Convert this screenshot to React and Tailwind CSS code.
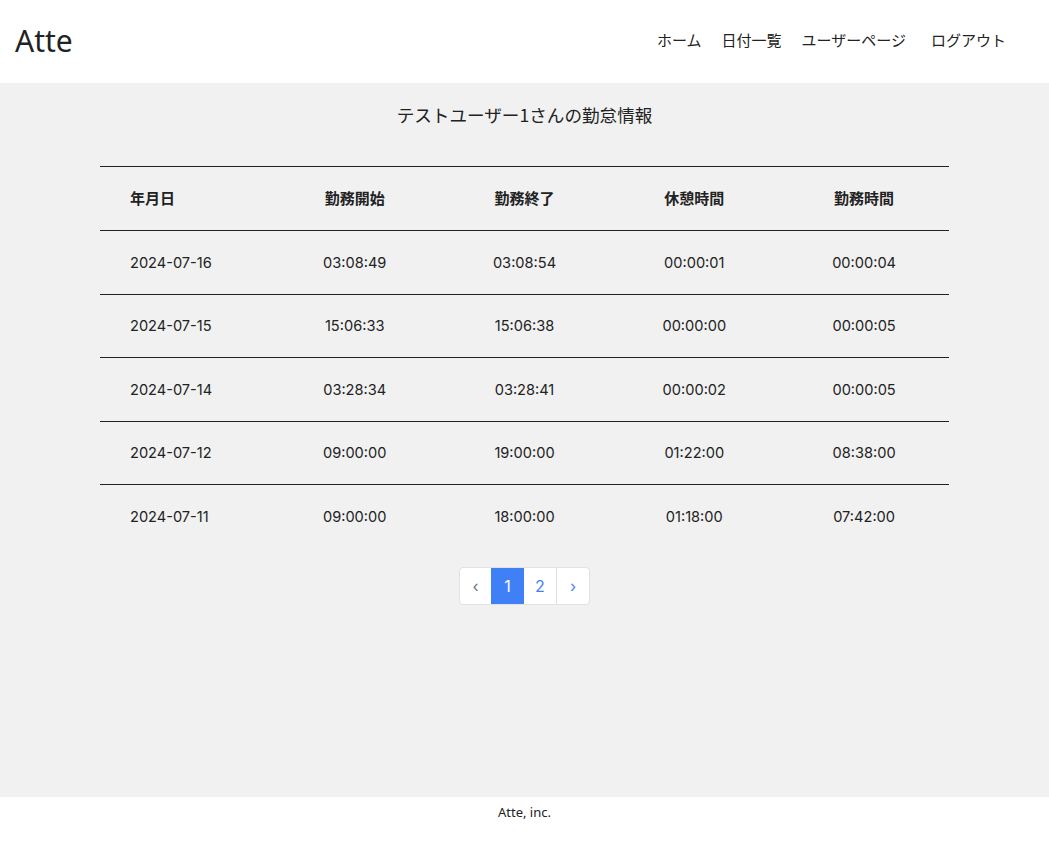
import React from "react";

const rows = [
  ["2024-07-16", "03:08:49", "03:08:54", "00:00:01", "00:00:04"],
  ["2024-07-15", "15:06:33", "15:06:38", "00:00:00", "00:00:05"],
  ["2024-07-14", "03:28:34", "03:28:41", "00:00:02", "00:00:05"],
  ["2024-07-12", "09:00:00", "19:00:00", "01:22:00", "08:38:00"],
  ["2024-07-11", "09:00:00", "18:00:00", "01:18:00", "07:42:00"],
];
const heads = ["年月日", "勤務開始", "勤務終了", "休憩時間", "勤務時間"];

export default function App() {
  return (
    <div className="min-h-[852px] flex flex-col bg-white text-[#222]" style={{ fontFamily: '"Noto Sans", "Noto Sans CJK JP", sans-serif' }}>
      <header className="h-[83px] flex items-center justify-between pl-[15px] pr-[43px] bg-white">
        <h1 className="text-[30px] leading-none text-[#222] -mt-[1px]">Atte</h1>
        <nav className="flex items-center text-[15px] text-[#222] -mt-[2px]" style={{ fontFamily: '"Noto Sans CJK JP", sans-serif' }}>
          <a className="mr-[20px]">ホーム</a>
          <a className="mr-[20px]">日付一覧</a>
          <a className="mr-[25px]">ユーザーページ</a>
          <a>ログアウト</a>
        </nav>
      </header>
      <main className="h-[714px] bg-[#f1f1f1] flex flex-col items-center">
        <h2 className="mt-[21px] text-[17.6px] leading-[22px] text-[#222]" style={{ fontFamily: '"Noto Sans CJK JP", sans-serif' }}>テストユーザー1さんの勤怠情報</h2>
        <table className="mt-[40px] w-[849px] border-collapse text-[14.6px] table-fixed" style={{ fontFamily: 'Inter, "Noto Sans CJK JP", sans-serif' }}>
          <thead>
            <tr className="h-[64px] border-t border-b border-[#222]">
              {heads.map((h, i) => (
                <th key={h} className={`font-bold text-[15px] text-[#222] ${i === 0 ? "text-left pl-[30px]" : "text-center"}`} style={{ fontFamily: '"Noto Sans CJK JP", sans-serif' }}>{h}</th>
              ))}
            </tr>
          </thead>
          <tbody>
            {rows.map((r, ri) => (
              <tr key={ri} className={`h-[63.5px] ${ri < rows.length - 1 ? "border-b border-[#222]" : ""}`}>
                {r.map((c, i) => (
                  <td key={i} className={`pt-[3px] text-[#222] ${i === 0 ? "text-left pl-[30px]" : "text-center"}`}>{c}</td>
                ))}
              </tr>
            ))}
          </tbody>
        </table>
        <div className="mt-[19px] flex h-[38px] border border-[#dee2e6] rounded-[4px] overflow-hidden bg-white text-[16px]" style={{ fontFamily: 'Inter, sans-serif' }}>
          <span className="w-[31px] flex items-center justify-center text-[#6c757d]">‹</span>
          <span className="w-[33px] flex items-center justify-center bg-[#3f80f7] text-white">1</span>
          <span className="w-[33px] flex items-center justify-center text-[#3f80f7] border-r border-[#dee2e6]">2</span>
          <span className="w-[32px] flex items-center justify-center text-[#3f80f7]">›</span>
        </div>
      </main>
      <footer className="h-[55px] bg-white flex justify-center pt-[5px]">
        <small className="text-[13px] leading-[20px] text-[#222]">Atte, inc.</small>
      </footer>
    </div>
  );
}
